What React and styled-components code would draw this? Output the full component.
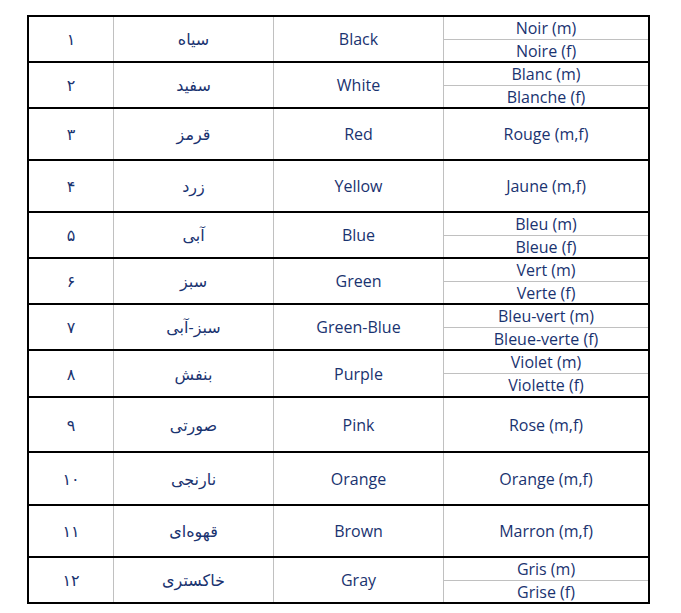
import styled, { createGlobalStyle } from "styled-components";

const GlobalStyle = createGlobalStyle`
    html, body {
        margin: 0;
        padding: 0;
        background: #fff;
    }
    body {
        font-family: "Open Sans", "DejaVu Sans", sans-serif;
    }
`

const Page = styled.div`
    padding: 15px 0 0 27px;
`

const Table = styled.div`
    width: 623px;
    box-sizing: border-box;
    border: 2px solid #000;
    color: #1a3370;
    font-size: 16px;
`

const Row = styled.div`
    display: grid;
    grid-template-columns: 84px 160px 170px 1fr;
    height: ${p => p.$h}px;
    border-top: ${p => p.$first ? "none" : "2px solid #000"};
`

const Cell = styled.div`
    display: flex;
    align-items: center;
    justify-content: center;
    border-left: ${p => p.$first ? "none" : "1px solid #c0c0c0"};
    direction: ${p => p.$rtl ? "rtl" : "ltr"};
    line-height: 1;
    white-space: nowrap;
`

const Split = styled.div`
    display: flex;
    flex-direction: column;
    border-left: 1px solid #c0c0c0;
`

const Sub = styled.div`
    height: ${p => p.$h}px;
    display: flex;
    align-items: center;
    justify-content: center;
    line-height: 1;
    white-space: nowrap;
    & + & {
        border-top: 1px solid #c0c0c0;
    }
`

const rows = [
    {n: "۱", fa: "سیاه", en: "Black", fr: ["Noir (m)", "Noire (f)"], h: 44},
    {n: "۲", fa: "سفید", en: "White", fr: ["Blanc (m)", "Blanche (f)"], h: 44},
    {n: "۳", fa: "قرمز", en: "Red", fr: ["Rouge (m,f)"], h: 50},
    {n: "۴", fa: "زرد", en: "Yellow", fr: ["Jaune (m,f)"], h: 50},
    {n: "۵", fa: "آبی", en: "Blue", fr: ["Bleu (m)", "Bleue (f)"], h: 44},
    {n: "۶", fa: "سبز", en: "Green", fr: ["Vert (m)", "Verte (f)"], h: 44},
    {n: "۷", fa: "سبز-آبی", en: "Green-Blue", fr: ["Bleu-vert (m)", "Bleue-verte (f)"], h: 44},
    {n: "۸", fa: "بنفش", en: "Purple", fr: ["Violet (m)", "Violette (f)"], h: 45},
    {n: "۹", fa: "صورتی", en: "Pink", fr: ["Rose (m,f)"], h: 53},
    {n: "۱۰", fa: "نارنجی", en: "Orange", fr: ["Orange (m,f)"], h: 51},
    {n: "۱۱", fa: "قهوه‌ای", en: "Brown", fr: ["Marron (m,f)"], h: 50},
    {n: "۱۲", fa: "خاکستری", en: "Gray", fr: ["Gris (m)", "Grise (f)"], h: 44},
]

export default function App(){
    return <Page>
        <GlobalStyle/>
        <Table>
            {rows.map((r, i) =>
                <Row key={i} $h={r.h} $first={i === 0}>
                    <Cell $first $rtl>{r.n}</Cell>
                    <Cell $rtl>{r.fa}</Cell>
                    <Cell>{r.en}</Cell>
                    {r.fr.length > 1
                        ? <Split>
                            <Sub $h={22}>{r.fr[0]}</Sub>
                            <Sub $h={r.h - 23}>{r.fr[1]}</Sub>
                        </Split>
                        : <Cell>{r.fr[0]}</Cell>}
                </Row>
            )}
        </Table>
    </Page>
}
